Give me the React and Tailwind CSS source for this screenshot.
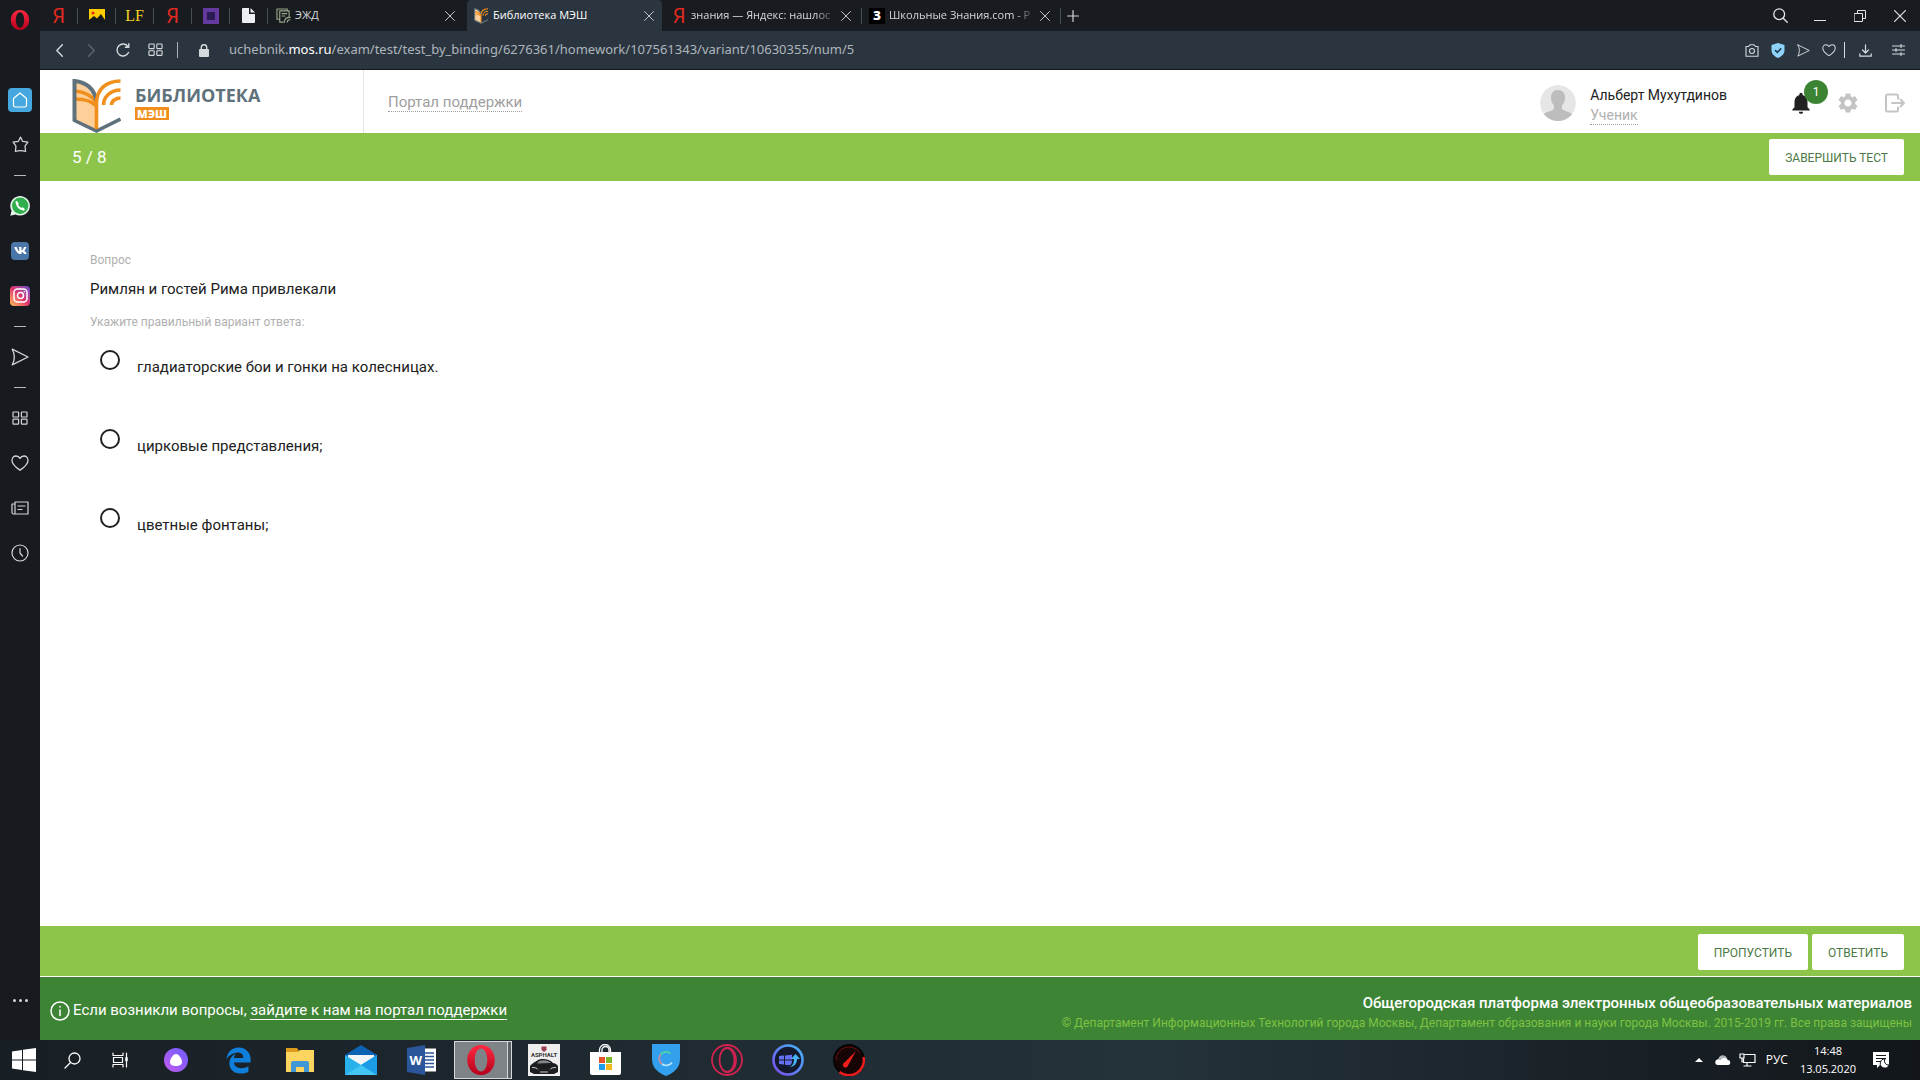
import React from "react";
import { FaVk } from "react-icons/fa";
import { FaEdgeLegacy } from "react-icons/fa6";
import { MdNotifications, MdSettings } from "react-icons/md";

const ui = "font-['Open_Sans','Noto_Sans',sans-serif]";

function Line({ size = 20, w = 24, h = 24, sw = 1.5, className = "", children }) {
  return (
    <svg
      width={size}
      height={(size * h) / w}
      viewBox={`0 0 ${w} ${h}`}
      fill="none"
      stroke="currentColor"
      strokeWidth={sw}
      strokeLinecap="round"
      strokeLinejoin="round"
      className={`shrink-0 ${className}`}
      aria-hidden="true"
    >
      {children}
    </svg>
  );
}

const Cross = ({ size = 10, sw = 1 }) => (
  <Line size={size} w={10} h={10} sw={sw}>
    <path d="M.5.5l9 9M9.5.5l-9 9" />
  </Line>
);

const Squares = ({ size }) => (
  <Line size={size} w={16} h={14} sw={1.2}>
    <rect x="1" y="1" width="5.6" height="5" rx=".6" />
    <rect x="9.4" y="1" width="5.6" height="5" rx=".6" />
    <rect x="1" y="8.2" width="5.6" height="5" rx=".6" />
    <rect x="9.4" y="8.2" width="5.6" height="5" rx=".6" />
  </Line>
);

const Plane = ({ size }) => (
  <Line size={size} w={18} h={18} sw={1.3}>
    <path d="M1.200 1.200L17 9 1.200 16.800Q5.500 9 1.200 1.200z" />
  </Line>
);

const Heart = ({ size }) => (
  <Line size={size} w={18} h={16} sw={1.3}>
    <path d="M9 15.2C5.4 12.6 1 9.6 1 5.4 1 2.8 2.8 1 5 1c1.800 0 3.200.8 4 2.400C9.800 1.800 11.200 1 13 1c2.200 0 4 1.800 4 4.400 0 4.200-4.400 7.200-8 9.800z" />
  </Line>
);

function OperaLogo({ size, id }) {
  return (
    <svg width={size} height={size} viewBox="0 0 24 24" aria-hidden="true">
      <defs>
        <linearGradient id={id} x1="0" y1="0" x2="0" y2="1">
          <stop offset="0" stopColor="#ff2a40" />
          <stop offset="1" stopColor="#b5001c" />
        </linearGradient>
      </defs>
      <path
        fillRule="evenodd"
        fill={`url(#${id})`}
        d="M12 0C5.400 0 1 5.400 1 12s4.400 12 11 12 11-5.400 11-12S18.600 0 12 0zm0 2.800c3 0 5 4 5 9.200s-2 9.200-5 9.200-5-4-5-9.200 2-9.200 5-9.200z"
      />
    </svg>
  );
}

function BookLogo({ width, height }) {
  return (
    <svg width={width} height={height} viewBox="0 0 48 54" fill="none" aria-hidden="true">
      <path d="M2 2v40l22 9V24C20 12 12 4 2 2z" fill="#ffcf9a" />
      <path d="M3 12c9 1 17 5 21 12M3 20c8 0 16 2 21 7" stroke="#f18f1c" strokeWidth="3.500" />
      <path d="M2 42V2c11 1 19 7 22 19" stroke="#5f717b" strokeWidth="4" />
      <path d="M1 41l23 11 24-12" stroke="#5f717b" strokeWidth="3.600" />
      <path d="M24 50V24C24 11 33 2 48 2" stroke="#f18f1c" strokeWidth="3.600" />
      <path d="M31 26c0-8 7-15 17-15M39 26c0-4 4-7 9-7" stroke="#f18f1c" strokeWidth="3.600" />
    </svg>
  );
}

const Ya = () => <span className="font-[Roboto,sans-serif] text-xl leading-5 text-[#e02a20]">Я</span>;

const pinned = [
  { name: "Яндекс", icon: <Ya /> },
  {
    name: "Картинки",
    icon: (
      <svg width="16" height="14" viewBox="0 0 16 14">
        <path d="M0 0h16v14H0z" fill="#ffcc00" />
        <path d="M0 14v-3l5-4 3 2.500L12 5l4 6v3z" fill="#15181c" />
        <circle cx="4" cy="4" r="1.600" fill="#e02a20" />
      </svg>
    ),
  },
  {
    name: "LF",
    icon: <span className="font-['Liberation_Serif',serif] text-base leading-5 text-[#f4d01e]">LF</span>,
  },
  { name: "Яндекс", icon: <Ya /> },
  { name: "Квадрат", icon: <span className="block size-4 border-4 border-[#643aa0] bg-[#2a1b52]" /> },
  {
    name: "Документ",
    icon: (
      <svg width="13" height="15" viewBox="0 0 13 15">
        <path d="M0 1a1 1 0 011-1h6v6h6v8a1 1 0 01-1 1H1a1 1 0 01-1-1z" fill="#eceff1" />
        <path d="M8.500 0L13 4.500H8.500z" fill="#eceff1" />
      </svg>
    ),
  },
];

function Tab({ icon, title, active, fade, sep, className }) {
  return (
    <div
      className={`flex h-full items-center gap-1 ${active ? "rounded-t bg-[#2b353f] pr-2 text-white" : "pr-3 text-[#d5d8da]"} ${className}`}
    >
      <span className="flex w-4 shrink-0 justify-center">{icon}</span>
      <button
        type="button"
        className={`min-w-0 flex-1 overflow-hidden text-left whitespace-nowrap ${fade ? "mask-r-from-85%" : ""}`}
      >
        {title}
      </button>
      <button type="button" aria-label="Закрыть вкладку" className="text-[#c3c7ca]">
        <Cross />
      </button>
      {sep && <span className="-mr-3 ml-1.5 h-4 w-px bg-[#4a4f54]" />}
    </div>
  );
}

function TabBar() {
  return (
    <div className={`flex h-[31px] items-center bg-[#181b20] text-[11px] ${ui}`}>
      {pinned.map((p, i) => (
        <button
          key={i}
          type="button"
          aria-label={p.name}
          className="flex w-[38px] shrink-0 items-center justify-center"
        >
          <span className="flex flex-1 justify-center">{p.icon}</span>
          <span className="h-4 w-px bg-[#4a4f54]" />
        </button>
      ))}
      <Tab
        className="w-[199px] pl-[7px]"
        title="ЭЖД"
        icon={
          <Line size={15} w={16} h={16} sw={1.200} className="text-[#9aa78a]">
            <path d="M3 12H1V1h11v2M14 9V3H4v12h4M6.500 6h5M6.500 8.500h3M9 15c0-3 2-5 6-5M12 15c0-1.500 1-2.500 3-2.500" />
          </Line>
        }
      />
      <Tab active className="w-[195px] pl-[6px]" title="Библиотека МЭШ" icon={<BookLogo width={14} height={16} />} />
      <Tab fade sep className="w-[200px] pl-[9px]" title="знания — Яндекс: нашлос" icon={<Ya />} />
      <Tab
        fade
        sep
        className="w-[199px] pl-[7px]"
        title="Школьные Знания.com - Р"
        icon={
          <span className="flex size-4 items-center justify-center bg-black text-xs leading-4 font-extrabold text-white">
            З
          </span>
        }
      />
      <button type="button" aria-label="Новая вкладка" className="ml-1.5 text-[#d5d8da]">
        <Line size={12} w={12} h={12} sw={1.200}>
          <path d="M6 .6v10.800M.6 6h10.800" />
        </Line>
      </button>
      <div className="ml-auto flex items-center text-[#e3e5e7]">
        <button type="button" aria-label="Поиск" className="flex w-10 justify-center">
          <Line size={15} w={15} h={15} sw={1.300}>
            <circle cx="6.200" cy="6.200" r="5.400" />
            <path d="M10.200 10.200l4 4" />
          </Line>
        </button>
        <button type="button" aria-label="Свернуть" className="flex w-10 justify-center pt-2.5">
          <span className="h-px w-3 bg-current" />
        </button>
        <button type="button" aria-label="Окно" className="flex w-10 justify-center">
          <Line size={12} w={12} h={12} sw={1}>
            <path d="M.5 3.500h8v8h-8zM3.500 3.500v-3h8v8h-3" />
          </Line>
        </button>
        <button type="button" aria-label="Закрыть" className="flex w-10 justify-center">
          <Cross size={12} />
        </button>
      </div>
    </div>
  );
}

function AddressBar() {
  const cell = "flex w-8 shrink-0 justify-center";
  return (
    <div className="flex h-[39px] items-center border-b border-[#14181c] bg-[#2b353f] pl-[3px] font-['Noto_Sans',sans-serif] text-[13px] text-[#d5dadd]">
      <button type="button" aria-label="Назад" className={cell}>
        <Line size={7} w={7} h={13} sw={1.400}>
          <path d="M6.300.8L.8 6.500l5.500 5.700" />
        </Line>
      </button>
      <button type="button" aria-label="Вперёд" className={`${cell} text-[#5d666e]`}>
        <Line size={7} w={7} h={13} sw={1.400}>
          <path d="M.7.8l5.500 5.700L.7 12.200" />
        </Line>
      </button>
      <button type="button" aria-label="Обновить" className={cell}>
        <Line size={14} w={14} h={14} sw={1.400}>
          <path d="M12.500 9.500A6 6 0 1112 3.600M12.800.8v3.400H9.400" />
        </Line>
      </button>
      <button type="button" aria-label="Экспресс-панель" className={cell}>
        <Squares size={15} />
      </button>
      <span className="ml-1.5 h-4 w-px bg-[#aab0b5]" />
      <svg width="10" height="13" viewBox="0 0 10 13" className="ml-[21px] shrink-0" aria-hidden="true">
        <rect y="5" width="10" height="8" rx="1" fill="#d5dadd" />
        <path d="M2.300 5.500V3.500a2.700 2.700 0 015.400 0v2" fill="none" stroke="#d5dadd" strokeWidth="1.400" />
      </svg>
      <label htmlFor="url" className="ml-5 text-[#aeb6bd]">
        uchebnik.<span className="text-white">mos.ru</span>
      </label>
      <input
        id="url"
        type="text"
        defaultValue="/exam/test/test_by_binding/6276361/homework/107561343/variant/10630355/num/5"
        className="min-w-0 flex-1 bg-transparent text-[#aeb6bd] outline-none"
      />
      <div className="flex items-center gap-3 pr-[15px]">
        <button type="button" aria-label="Снимок">
          <Line size={14} w={14} h={13} sw={1.100}>
            <path d="M1 2.500h2.500L5 .8h4l1.500 1.700H13v9.700H1z" />
            <circle cx="7" cy="7" r="2.500" />
          </Line>
        </button>
        <button type="button" aria-label="Защита">
          <svg width="14" height="15" viewBox="0 0 14 15">
            <path d="M7 0l6.500 2v5c0 4-3 6.500-6.500 8C3.500 13.500.5 11 .5 7V2z" fill="#8fd3fb" />
            <path d="M4 7.200l2.300 2.200L10.200 5.400" fill="none" stroke="#1d3d52" strokeWidth="1.600" />
          </svg>
        </button>
        <button type="button" aria-label="Отправить">
          <Plane size={13} />
        </button>
        <button type="button" aria-label="В избранное">
          <Heart size={14} />
        </button>
        <span className="-ml-1 h-4 w-px bg-[#d5dadd]" />
        <button type="button" aria-label="Загрузки" className="ml-0.5">
          <Line size={13} w={13} h={13} sw={1.200}>
            <path d="M6.500.8v8M3.500 6l3 3 3-3M.8 9.800v2.400h11.400V9.800" />
          </Line>
        </button>
        <button type="button" aria-label="Настройка" className="ml-2">
          <Line size={13} w={13} h={12} sw={1.100}>
            <path d="M.5 2h12M.5 6h12M.5 10h12M9 .5v3M4 4.500v3M9 8.500v3" />
          </Line>
        </button>
      </div>
    </div>
  );
}

const rail = [
  {
    name: "Домой",
    icon: (
      <span className="flex size-6 items-center justify-center rounded-sm bg-[#45a9e0] text-white">
        <Line size={16} w={16} h={16} sw={1.200}>
          <path d="M8 1L1.500 6.500V13A1.800 1.800 0 003.300 15h9.400A1.800 1.800 0 0014.500 13V6.500z" />
        </Line>
      </span>
    ),
  },
  {
    name: "Закладки",
    icon: (
      <Line size={17} w={18} h={18} sw={1.300}>
        <path d="M9 1.200l2.200 4.400 5.600.8-3 4.300.6 5.700Q9 14.600 3.600 16.400l.6-5.700-3-4.300 5.600-.8z" />
      </Line>
    ),
  },
  null,
  {
    name: "WhatsApp",
    icon: (
      <svg width="20" height="20" viewBox="0 0 20 20">
        <path d="M.3 19.700l1.300-5A9.800 9.800 0 115.400 18.400z" fill="#e8f5ea" />
        <circle cx="10.200" cy="9.800" r="8.200" fill="#2fae4e" />
        <g fill="none" stroke="#fff" strokeWidth="2" strokeLinecap="round">
          <path d="M6.600 6.300c.2 3.800 3.200 7 7 7.200" />
          <path d="M6.600 6.300l1 1.500M13.600 13.500l-1.200-1.200" />
        </g>
      </svg>
    ),
  },
  {
    name: "ВКонтакте",
    icon: (
      <span className="flex size-[18px] items-center justify-center rounded bg-[#4a76a8] text-white">
        <FaVk size={13} />
      </span>
    ),
  },
  {
    name: "Instagram",
    icon: (
      <span className="flex size-5 items-center justify-center rounded bg-linear-to-tr from-[#fdb94e] via-[#e1306c] to-[#6a3fd0] text-white">
        <Line size={15} w={15} h={15} sw={1.500}>
          <rect x="1" y="1" width="13" height="13" rx="3.500" />
          <circle cx="7.500" cy="7.500" r="3" />
          <path d="M11.300 3.700h.01" />
        </Line>
      </span>
    ),
  },
  null,
  { name: "Моя лента", icon: <Plane size={18} /> },
  null,
  { name: "Экспресс-панель", icon: <Squares size={16} /> },
  { name: "Избранное", icon: <Heart size={18} /> },
  {
    name: "Новости",
    icon: (
      <Line size={18} w={18} h={14} sw={1.200}>
        <path d="M4 1h13v12H2.500A1.500 1.500 0 011 11.500V3h3M4 1v11M7 5h7M7 8.500h4" />
      </Line>
    ),
  },
  {
    name: "История",
    icon: (
      <Line size={18} w={18} h={18} sw={1.200}>
        <circle cx="9" cy="9" r="8" />
        <path d="M9 4.500V9l2.500 3" />
      </Line>
    ),
  },
];

function Rail() {
  return (
    <nav className="flex w-10 shrink-0 flex-col items-center bg-[#171b20] pt-2.5 text-[#d3d6d9]">
      <button type="button" aria-label="Меню Opera">
        <OperaLogo size={20} id="opera-menu" />
      </button>
      <div className="mt-[47px] flex w-full flex-col items-center">
        {rail.map((r, i) =>
          r ? (
            <button key={i} type="button" aria-label={r.name} className="flex h-[45px] w-full items-center justify-center">
              {r.icon}
            </button>
          ) : (
            <span key={i} className="flex h-4 items-center">
              <span className="h-px w-3 bg-[#b4b8bb]" />
            </span>
          ),
        )}
      </div>
      <button type="button" aria-label="Ещё" className="mt-auto mb-[38px] flex gap-[3px]">
        <span className="size-[3px] rounded-full bg-current" />
        <span className="size-[3px] rounded-full bg-current" />
        <span className="size-[3px] rounded-full bg-current" />
      </button>
    </nav>
  );
}

function SiteHeader() {
  return (
    <header className="flex h-[63px] items-stretch bg-white pr-[15px] pl-8">
      <a href="#library" className="flex w-[292px] items-center gap-[14px] border-r border-[#e3e3e3] pt-2">
        <BookLogo width={49} height={54} />
        <span className="flex flex-col items-start gap-0.5 pb-[7px]">
          <span className="font-['Open_Sans',sans-serif] text-lg leading-5 font-bold text-[#5f717b]">БИБЛИОТЕКА</span>
          <span className="bg-[#f18f1c] px-0.5 font-['Open_Sans',sans-serif] text-[11px] leading-[13px] font-extrabold text-white">
            МЭШ
          </span>
        </span>
      </a>
      <div className="flex items-center pt-0.5 pl-6">
        <a href="#support" className="border-b border-dotted border-[#9e9e9e] text-[15px] leading-[18px] text-[#9e9e9e]">
          Портал поддержки
        </a>
      </div>
      <div className="ml-auto flex items-center pt-0.5">
        <svg width="36" height="36" viewBox="0 0 36 36" className="rounded-full" aria-hidden="true">
          <circle cx="18" cy="18" r="18" fill="#e6e6e6" />
          <path
            d="M18 5c4.500 0 7 3 7 7.500 0 3-1 6-3 8v3c0 2.500 9 3 10.500 6.500L30 36H6l-2.500-6C5 26.500 14 26 14 23.500v-3c-2-2-3-5-3-8C11 8 13.500 5 18 5z"
            fill="#bdbdbd"
          />
        </svg>
        <div className="ml-[14px] flex flex-col items-start gap-px pt-[5px]">
          <span className="text-sm leading-5 text-[#212121]">Альберт Мухутдинов</span>
          <button type="button" className="border-b border-dotted border-[#9e9e9e] text-sm leading-[18px] text-[#b0b0b0]">
            Ученик
          </button>
        </div>
        <button type="button" aria-label="Уведомления: 1" className="relative ml-[61px] text-[#212121]">
          <MdNotifications size={26} />
          <span className="absolute -top-2.5 left-4 flex size-6 items-center justify-center rounded-full bg-[#3c8434] text-xs text-white">
            1
          </span>
        </button>
        <button type="button" aria-label="Настройки" className="ml-[22px] text-[#c4c4c4]">
          <MdSettings size={24} />
        </button>
        <button type="button" aria-label="Выйти" className="ml-[25px] text-[#c4c4c4]">
          <Line size={20} w={20} h={20} sw={2}>
            <path d="M13 5.500V3a1.500 1.500 0 00-1.500-1.500H2.500A1.500 1.500 0 001 3v14a1.500 1.500 0 001.500 1.500h9A1.500 1.500 0 0013 17v-2.500M7 10h12M15.500 6.500L19 10l-3.500 3.500" />
          </Line>
        </button>
      </div>
    </header>
  );
}

const WhiteButton = ({ children }) => (
  <button type="button" className="h-9 rounded-xs bg-white px-4 pt-0.5 text-xs text-[#4c7a46] uppercase">
    {children}
  </button>
);

const answers = ["гладиаторские бои и гонки на колесницах.", "цирковые представления;", "цветные фонтаны;"];

function Question() {
  return (
    <main className="flex-1 bg-white px-[50px] pt-[71px] text-[15px]">
      <p className="text-xs leading-4 text-[#b0b0b0]">Вопрос</p>
      <fieldset>
        <legend className="pt-[9px] leading-6 text-[#212121]">Римлян и гостей Рима привлекали</legend>
        <p className="mt-[13px] text-xs leading-4 text-[#b0b0b0]">Укажите правильный вариант ответа:</p>
        <div className="mt-5 pl-2.5">
          {answers.map((a, i) => (
            <label key={a} className="flex h-[79px] items-start gap-[17px]">
              <input
                type="radio"
                name="answer"
                value={i}
                className="size-5 shrink-0 appearance-none rounded-full border-2 border-[#212121] checked:border-[6px]"
              />
              <span className="pt-[5px] leading-6 text-[#212121]">{a}</span>
            </label>
          ))}
        </div>
      </fieldset>
    </main>
  );
}

function SiteFooter() {
  return (
    <footer className="flex h-[63px] items-center justify-between bg-[#3e8435] pr-2 pl-2.5">
      <p className="flex items-center gap-[3px] pt-1 text-[15px] text-white">
        <Line size={20} w={20} h={20} sw={1.500}>
          <circle cx="10" cy="10" r="9" />
          <path d="M10 9v5.500M10 5.500v.6" />
        </Line>
        <span>
          Если возникли вопросы,{" "}
          <a href="#support" className="border-b border-white">
            зайдите к нам на портал поддержки
          </a>
        </span>
      </p>
      <div className="pt-2 text-right">
        <p className="text-[15px] leading-5 font-medium text-white">
          Общегородская платформа электронных общеобразовательных материалов
        </p>
        <p className="text-xs leading-5 text-[#7cc242]">
          © Департамент Информационных Технологий города Москвы, Департамент образования и науки города Москвы. 2015-2019
          гг. Все права защищены
        </p>
      </div>
    </footer>
  );
}

const apps = [
  { name: "Edge", icon: <FaEdgeLegacy size={27} className="text-[#0f7fdb]" /> },
  {
    name: "Проводник",
    icon: (
      <svg width="28" height="24" viewBox="0 0 28 24">
        <path d="M0 0h11l2 3h15v21H0z" fill="#dd9b1c" />
        <path d="M0 4h12l2-2h14v22H0z" fill="#fbd55e" />
        <path d="M5 24v-9a2 2 0 012-2h14a2 2 0 012 2v9h-5v-5h-8v5z" fill="#3f97d6" />
      </svg>
    ),
  },
  {
    name: "Почта",
    icon: (
      <svg width="32" height="30" viewBox="0 0 32 30">
        <path d="M0 10L16 0l16 10v8H0z" fill="#0d63b3" />
        <path d="M3 10h26v12H3z" fill="#f2f4f7" />
        <path d="M0 10l16 10L32 10v20H0z" fill="#29b1ec" />
        <path d="M32 10v20H0l16-10z" fill="#1c9be6" />
        <path d="M0 30l16-10 16 10z" fill="#43c6f4" />
      </svg>
    ),
  },
  {
    name: "Word",
    icon: (
      <svg width="30" height="30" viewBox="0 0 30 30">
        <path d="M16 3.500h13v23H16z" fill="#fff" />
        <path d="M18 8h9M18 11.500h9M18 15h9M18 18.500h9M18 22h9" stroke="#2b579a" strokeWidth="1.600" />
        <path d="M0 3l18-3v30L0 27z" fill="#2b579a" />
        <text x="2.500" y="19.500" fontSize="13" fontWeight="700" fontFamily="Open Sans" fill="#fff">
          W
        </text>
      </svg>
    ),
  },
  { name: "Opera", active: true, icon: <OperaLogo size={30} id="opera-task" /> },
  {
    name: "Asphalt",
    icon: (
      <svg width="32" height="32" viewBox="0 0 32 32">
        <path d="M0 0h32v32H0z" fill="#eeeeee" />
        <path d="M13.500 2.500h5v3.500l-2.500 2-2.500-2z" fill="#9c4050" />
        <text x="16" y="13" fontSize="6" fontWeight="700" textAnchor="middle" fontFamily="Roboto" fill="#333">
          ASPHALT
        </text>
        <path d="M2 22c2-3 5-3.500 8-6 4-2 12-1 15 3 3 .5 5 2 5 4v5l-4 2H6l-4-2z" fill="#1c1d20" />
        <path d="M11 17c4-1.500 9-1 12 2l-14 .5z" fill="#83878c" />
        <path d="M4 23.500c3 0 5 .5 6 2M28 23.500c-3 0-5 .5-6 2M12 28h8" stroke="#c9ccd0" fill="none" />
      </svg>
    ),
  },
  {
    name: "Microsoft Store",
    icon: (
      <svg width="32" height="32" viewBox="0 0 32 32">
        <path d="M10.500 9V6a5.500 5.500 0 0111 0v3M13 9V6a3.500 3.500 0 017 0v3" stroke="#fff" fill="none" strokeWidth="1.300" />
        <path d="M1 8h31v21a2 2 0 01-2 2H3a2 2 0 01-2-2z" fill="#fff" />
        <path d="M10 13h6v6h-6z" fill="#e8542a" />
        <path d="M17 13h6v6h-6z" fill="#7db829" />
        <path d="M10 20h6v6h-6z" fill="#1e9de8" />
        <path d="M17 20h6v6h-6z" fill="#f7b718" />
      </svg>
    ),
  },
  {
    name: "Hotspot Shield",
    icon: (
      <svg width="28" height="32" viewBox="0 0 28 32">
        <path d="M0 0h28v15c0 9-6 13.500-14 17C6 28.500 0 24 0 15z" fill="#32a0ec" />
        <path d="M18.500 9.500a7 7 0 00-10 1" fill="none" stroke="#53d6a5" strokeWidth="1.800" />
        <path d="M8.500 10.500a7 7 0 001.500 9.500" fill="none" stroke="#c98c9c" strokeWidth="1.800" />
        <path d="M10 20a7 7 0 0010-1.500" fill="none" stroke="#b6e3ff" strokeWidth="1.800" />
      </svg>
    ),
  },
  {
    name: "Opera GX",
    icon: (
      <svg width="32" height="32" viewBox="0 0 32 32" fill="none" stroke="#d0234f" strokeWidth="1.800">
        <circle cx="16" cy="16" r="15" />
        <ellipse cx="16" cy="16" rx="7.500" ry="12" />
        <path d="M14 4c6-2 11 4 11 12s-5 14-11 12" />
      </svg>
    ),
  },
  {
    name: "Оптимизация",
    icon: (
      <svg width="32" height="32" viewBox="0 0 32 32">
        <defs>
          <linearGradient id="ring" x1="0" y1="1" x2="1" y2="0">
            <stop offset="0" stopColor="#7a4df0" />
            <stop offset="1" stopColor="#43b8f7" />
          </linearGradient>
        </defs>
        <circle cx="16" cy="16" r="14.500" fill="#141a2e" stroke="url(#ring)" strokeWidth="2.600" />
        <path d="M7 12l5-.5v4H7zM13 11.400l7-.7v4.800h-7zM7 16.500h5v4L7 20zM13 16.500h7c0 3-1 4.500-3 4.800l-4-.5z" fill="#6470f0" />
        <path d="M17 23c4-1 5-4 5-8h-3l4.500-5 4.500 5h-3c0 5-3 8-8 8z" fill="#46b4f5" />
      </svg>
    ),
  },
  {
    name: "Разгон",
    icon: (
      <svg width="32" height="32" viewBox="0 0 32 32">
        <circle cx="16" cy="16" r="15" fill="#170506" stroke="#050505" strokeWidth="2" />
        <path d="M6.500 28A15 15 0 0030.500 13" fill="none" stroke="#ee1c1c" strokeWidth="2.500" />
        <path d="M3 16a13 13 0 0124-7" fill="none" stroke="#6b1113" />
        <path d="M23 7L11.500 18.500a2.600 2.600 0 103.500 3z" fill="#f21d1d" />
      </svg>
    ),
  },
];

function TaskBar() {
  return (
    <div
      className={`flex h-10 items-center bg-linear-to-r from-[#181f24] via-[#24323a] via-60% to-[#12161a] text-white ${ui}`}
    >
      <button type="button" aria-label="Пуск" className="flex w-12 justify-center">
        <svg width="24" height="24" viewBox="0 0 24 24" fill="#fff">
          <path d="M0 3.400L10 2v9.500H0zM11 1.800L24 0v11.500H11zM0 12.500h10V22L0 20.600zM11 12.500h13V24l-13-1.800z" />
        </svg>
      </button>
      <button type="button" aria-label="Поиск" className="flex w-12 justify-center">
        <Line size={17} w={17} h={17} sw={1.300}>
          <circle cx="10.500" cy="6.500" r="5.500" />
          <path d="M6.500 10.500L1 16" />
        </Line>
      </button>
      <button type="button" aria-label="Представление задач" className="flex w-12 justify-center">
        <Line size={16} w={16} h={16} sw={1.200}>
          <path d="M1 1v2.500h10V1M1.500 5.500h9v5h-9zM1 15v-2.500h10V15M14.500 1v4M14.500 10v5" />
          <path d="M14.500 6v2.500" strokeWidth="2.500" />
        </Line>
      </button>
      <button type="button" aria-label="Алиса" className="flex w-16 justify-center">
        <svg width="24" height="24" viewBox="0 0 24 24">
          <defs>
            <linearGradient id="alice" x1="1" y1="0" x2="0" y2="1">
              <stop offset="0" stopColor="#6a5cff" />
              <stop offset="1" stopColor="#c45cf0" />
            </linearGradient>
          </defs>
          <circle cx="12" cy="12" r="12" fill="url(#alice)" />
          <path d="M12 6c3 0 6 5 6 8s-3 4-6 4-6-1-6-4 3-8 6-8z" fill="#fff" />
        </svg>
      </button>
      {apps.map((a) => (
        <button key={a.name} type="button" aria-label={a.name} className="flex h-full w-[61px] items-center justify-center">
          {a.active ? (
            <span className="flex h-[38px] w-[58px] border border-[#d5d8da] bg-[#7d8387]">
              <span className="flex flex-1 items-center justify-center">{a.icon}</span>
              <span className="w-1 border-l border-[#d5d8da] bg-[#596066]" />
            </span>
          ) : (
            a.icon
          )}
        </button>
      ))}
      <div className="ml-auto flex items-center pr-[30px] text-[11px]">
        <button type="button" aria-label="Скрытые значки" className="mr-3">
          <svg width="8" height="4" viewBox="0 0 8 4">
            <path d="M4 0l4 4H0z" fill="#fff" />
          </svg>
        </button>
        <svg width="16" height="10" viewBox="0 0 16 10" className="mr-2" aria-hidden="true">
          <path d="M4 9a3 3 0 01-.5-5.500A4.500 4.500 0 0112 3l2 6z" fill="#aeb3b7" />
          <path d="M3 10a2.700 2.700 0 010-5.400c1-.1 2 .2 2.500.7A4 4 0 0112.500 5a2.500 2.500 0 01.5 5z" fill="#fff" />
        </svg>
        <Line size={17} w={17} h={14} sw={1.200} className="mr-2.5">
          <path d="M6 1.500h10v8H4.500V6M8 9.500v3.500M5 13h7M1 1h4v4H1zM3 5v4" />
        </Line>
        <button type="button" className="text-xs">
          РУС
        </button>
        <div className="ml-3 text-center leading-[18px]">
          <div>14:48</div>
          <div>13.05.2020</div>
        </div>
        <button type="button" aria-label="Центр уведомлений" className="ml-[17px]">
          <svg width="17" height="16" viewBox="0 0 17 16">
            <path d="M0 0h16v13H7l-3 3v-3H0z" fill="#fff" />
            <path d="M3 3.500h10M3 6.500h10M3 9.500h5" stroke="#161b1f" strokeWidth="1.200" />
            <path d="M12 7a4.500 4.500 0 104 6 4 4 0 01-4-6z" fill="#fff" stroke="#161b1f" />
          </svg>
        </button>
      </div>
    </div>
  );
}

export default function App() {
  return (
    <div className="flex min-h-screen flex-col font-[Roboto,sans-serif]">
      <div className="flex flex-1">
        <Rail />
        <div className="flex min-w-0 flex-1 flex-col">
          <TabBar />
          <AddressBar />
          <SiteHeader />
          <div className="flex h-12 items-center justify-between bg-[#8dc54b] pr-4 pl-8">
            <span className="pt-0.5 text-[17px] text-white">5 / 8</span>
            <WhiteButton>Завершить тест</WhiteButton>
          </div>
          <Question />
          <div className="flex h-[51px] items-center justify-end gap-1 border-b border-white bg-[#8dc54b] pt-0.5 pr-4">
            <WhiteButton>Пропустить</WhiteButton>
            <WhiteButton>Ответить</WhiteButton>
          </div>
          <SiteFooter />
        </div>
      </div>
      <TaskBar />
    </div>
  );
}
